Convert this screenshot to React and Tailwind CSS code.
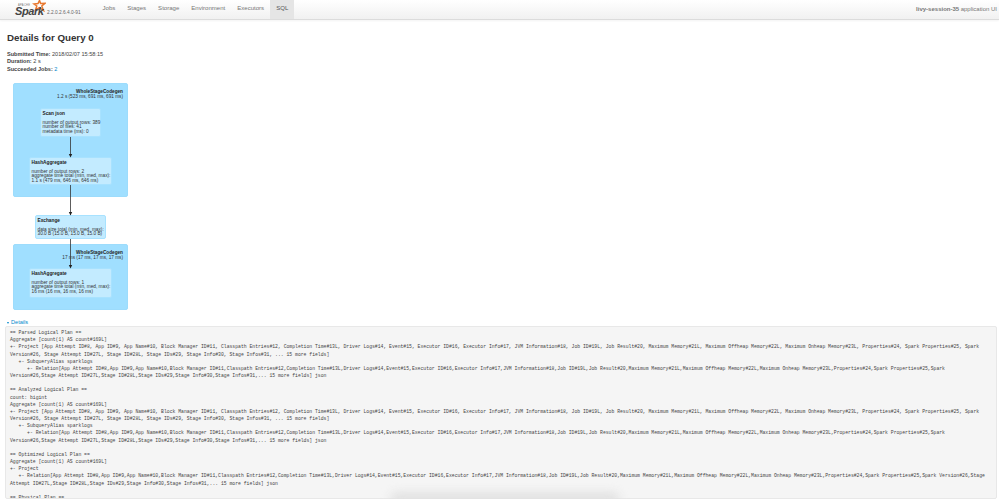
const parsedLines = [
  "== Parsed Logical Plan ==",
  "Aggregate [count(1) AS count#169L]",
  "+- Project [App Attempt ID#8, App ID#9, App Name#10, Block Manager ID#11, Classpath Entries#12, Completion Time#13L, Driver Logs#14, Event#15, Executor ID#16, Executor Info#17, JVM Information#18, Job ID#19L, Job Result#20, Maximum Memory#21L, Maximum Offheap Memory#22L, Maximum Onheap Memory#23L, Properties#24, Spark Properties#25, Spark",
  "Version#26, Stage Attempt ID#27L, Stage ID#28L, Stage IDs#29, Stage Info#30, Stage Infos#31, ... 15 more fields]",
  "   +- SubqueryAlias sparklogs",
  "      +- Relation[App Attempt ID#8,App ID#9,App Name#10,Block Manager ID#11,Classpath Entries#12,Completion Time#13L,Driver Logs#14,Event#15,Executor ID#16,Executor Info#17,JVM Information#18,Job ID#19L,Job Result#20,Maximum Memory#21L,Maximum Offheap Memory#22L,Maximum Onheap Memory#23L,Properties#24,Spark Properties#25,Spark",
  "Version#26,Stage Attempt ID#27L,Stage ID#28L,Stage IDs#29,Stage Info#30,Stage Infos#31,... 15 more fields] json",
  "",
  "== Analyzed Logical Plan ==",
  "count: bigint",
  "Aggregate [count(1) AS count#169L]",
  "+- Project [App Attempt ID#8, App ID#9, App Name#10, Block Manager ID#11, Classpath Entries#12, Completion Time#13L, Driver Logs#14, Event#15, Executor ID#16, Executor Info#17, JVM Information#18, Job ID#19L, Job Result#20, Maximum Memory#21L, Maximum Offheap Memory#22L, Maximum Onheap Memory#23L, Properties#24, Spark Properties#25, Spark",
  "Version#26, Stage Attempt ID#27L, Stage ID#28L, Stage IDs#29, Stage Info#30, Stage Infos#31, ... 15 more fields]",
  "   +- SubqueryAlias sparklogs",
  "      +- Relation[App Attempt ID#8,App ID#9,App Name#10,Block Manager ID#11,Classpath Entries#12,Completion Time#13L,Driver Logs#14,Event#15,Executor ID#16,Executor Info#17,JVM Information#18,Job ID#19L,Job Result#20,Maximum Memory#21L,Maximum Offheap Memory#22L,Maximum Onheap Memory#23L,Properties#24,Spark Properties#25,Spark",
  "Version#26,Stage Attempt ID#27L,Stage ID#28L,Stage IDs#29,Stage Info#30,Stage Infos#31,... 15 more fields] json",
  "",
  "== Optimized Logical Plan ==",
  "Aggregate [count(1) AS count#169L]",
  "+- Project",
  "   +- Relation[App Attempt ID#8,App ID#9,App Name#10,Block Manager ID#11,Classpath Entries#12,Completion Time#13L,Driver Logs#14,Event#15,Executor ID#16,Executor Info#17,JVM Information#18,Job ID#19L,Job Result#20,Maximum Memory#21L,Maximum Offheap Memory#22L,Maximum Onheap Memory#23L,Properties#24,Spark Properties#25,Spark Version#26,Stage",
  "Attempt ID#27L,Stage ID#28L,Stage IDs#29,Stage Info#30,Stage Infos#31,... 15 more fields] json",
  "",
  "== Physical Plan ==",
];

const navItems = ["Jobs", "Stages", "Storage", "Environment", "Executors"];

function Cluster({ className, title, sub }) {
  return (
    <div className={`absolute left-[13px] w-[115px] rounded-[2px] bg-[#a0dfff] border border-[#9ddcfc] pr-[4px] pt-[5px] text-right ${className}`}>
      <div className="font-bold text-[4.7px] leading-[6px] text-[#222]">{title}</div>
      <div className="text-[4.7px] leading-[4px] text-[#333]">{sub}</div>
    </div>
  );
}

function Node({ className, title, lines }) {
  return (
    <div className={`absolute rounded-[2px] bg-[#c3ebff] border border-[#a8e2ff] pl-[1.5px] pt-[1.5px] text-[4.75px] leading-[4.7px] text-[#333] whitespace-nowrap ${className}`}>
      <div className="font-bold text-[#222] mb-[4.15px] leading-[6px]">{title}</div>
      {lines.map((l) => (
        <div key={l}>{l}</div>
      ))}
    </div>
  );
}

export default function App() {
  return (
    <div className="w-[999px] h-[499px] overflow-hidden relative flex flex-col bg-white font-['Liberation_Sans',sans-serif] text-[#333]">
      <header className="h-[20px] shrink-0 flex items-stretch bg-gradient-to-b from-white to-[#f1f1f1] border-b border-[#dcdcdc] shadow-[0_1px_2px_rgba(0,0,0,0.05)]">
        <div className="relative w-[97px] shrink-0">
          <svg className="absolute left-[32px] top-0" width="14" height="12" viewBox="0 0 14 12">
            <path d="M7.5 0.5 L8.6 3.6 L13 3.4 L9.8 6 L11.5 10.5 L7.4 7.7 L3.5 10 L4.8 6 L2 4 L6 3.6 Z" fill="#fff" stroke="#e8782f" strokeWidth="1.5" />
          </svg>
          <span className="absolute left-[18px] top-[3.5px] text-[2.6px] leading-[3px] tracking-[0.3px] text-[#777]">APACHE</span>
          <span className="absolute left-[15px] top-[5px] text-[11px] leading-[12px] italic font-bold tracking-[-0.4px] text-[#444]">Spark</span>
          <span className="absolute left-[47px] top-[10px] text-[4.8px] leading-[6px] text-[#666] whitespace-nowrap">2.2.0.2.6.4.0-91</span>
        </div>
        <nav className="flex items-stretch ml-[-0.5px] text-[6.05px] text-[#777]">
          {navItems.map((n) => (
            <span key={n} className="px-[6px] flex items-center pb-[1px]">{n}</span>
          ))}
          <span className="px-[6px] flex items-center pb-[1px] bg-[#e5e5e5] text-[#555]">SQL</span>
        </nav>
        <div className="ml-auto pr-[2px] flex items-center pb-[1px] text-[6px] text-[#777] whitespace-nowrap">
          <span className="font-bold">livy-session-35</span>
          <span className="ml-[1.5px]">application UI</span>
        </div>
      </header>

      <main className="px-[7px] shrink-0">
        <h3 className="mt-[12px] text-[9.75px] leading-[12px] font-bold text-[#333]">Details for Query 0</h3>
        <ul className="mt-[7px] text-[5.57px] leading-[7.4px] text-[#444]">
          <li><strong>Submitted Time:</strong> 2018/02/07 15:58:15</li>
          <li><strong>Duration:</strong> 2 s</li>
          <li><strong>Succeeded Jobs:</strong> <span className="text-[#0088cc]">2</span></li>
        </ul>
      </main>

      <section className="relative shrink-0 mt-[6.8px] h-[239px]">
        <Cluster className="top-[3px] h-[114px]" title="WholeStageCodegen" sub="1.2 s (523 ms, 691 ms, 691 ms)" />
        <Cluster className="top-[164px] h-[66px]" title="WholeStageCodegen" sub="17 ms (17 ms, 17 ms, 17 ms)" />
        <Node className="left-[40px] top-[28px] w-[61px] h-[29px]" title="Scan json" lines={["number of output rows: 389", "number of files: 41", "metadata time (ms): 0"]} />
        <Node className="left-[29px] top-[77px] w-[83px] h-[28px]" title="HashAggregate" lines={["number of output rows: 2", "aggregate time total (min, med, max):", "1.1 s (479 ms, 646 ms, 646 ms)"]} />
        <Node className="left-[35px] top-[135px] w-[71px] h-[24px]" title="Exchange" lines={["data size total (min, med, max):", "30.0 B (15.0 B, 15.0 B, 15.0 B)"]} />
        <Node className="left-[29px] top-[188px] w-[83px] h-[30px]" title="HashAggregate" lines={["number of output rows: 1", "aggregate time total (min, med, max):", "16 ms (16 ms, 16 ms, 16 ms)"]} />
        <svg className="absolute left-0 top-0" width="140" height="240">
          <path d="M70.5 57 V74 M70.5 105 V135 M70.5 159 V185" stroke="#333" strokeWidth="0.8" fill="none" />
          <path d="M68.8 74 H72.2 L70.5 77.5 Z M68.8 132 H72.2 L70.5 135.5 Z M68.8 185 H72.2 L70.5 188.5 Z" fill="#222" />
        </svg>
      </section>

      <div className="shrink-0 h-[7px] pl-[7px] flex items-center gap-[2px] text-[5.6px] leading-[7px] text-[#0088cc]">
        <span className="w-0 h-0 border-x-[1.75px] border-x-transparent border-t-[2.5px] border-t-[#0088cc]" />
        <span>Details</span>
      </div>

      <pre className="flex-1 min-h-0 ml-[5px] mr-[2px] overflow-hidden bg-[#f5f5f5] border border-[#e8e8e8] rounded-[2px] pl-[4px] pt-[2px] font-['Liberation_Mono',monospace] text-[4.76px] leading-[7.17px] text-[#444] whitespace-pre">
        {parsedLines.join("\n")}
      </pre>

      <div className="absolute left-[390px] bottom-[-7px] w-[230px] h-[14px] rounded-full bg-[#e2e2e2] blur-[5px]" />
    </div>
  );
}
